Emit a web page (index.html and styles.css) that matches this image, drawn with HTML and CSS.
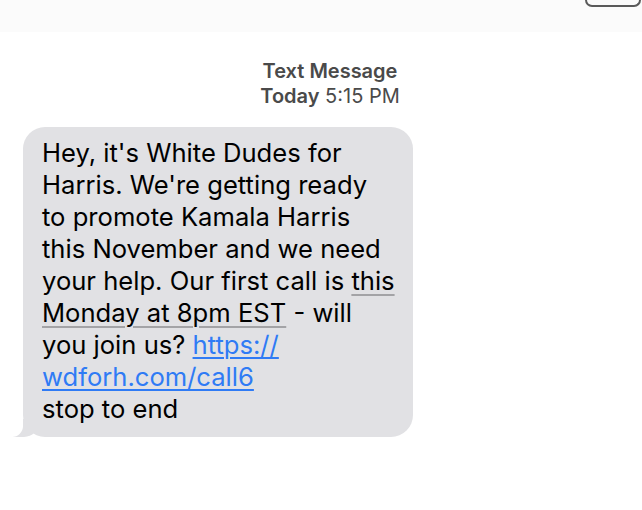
FILE: index.html
```html
<!DOCTYPE html>
<html lang="en">
<head>
    <meta charset="UTF-8">
    <meta name="viewport" content="width=device-width, initial-scale=1.0">
    <title>Text Message</title>
    <link rel="stylesheet" href="styles.css">
</head>
<body>
    <div class="topbar">
        <div class="search-edge"></div>
    </div>
    <div class="thread">
        <div class="thread-meta">
            <div class="meta-service">Text Message</div>
            <div class="meta-time"><span class="meta-day">Today</span> 5:15 PM</div>
        </div>
        <div class="message">
            <div class="bubble">
                Hey, it's White Dudes for<br>
                Harris. We're getting ready<br>
                to promote Kamala Harris<br>
                this November and we need<br>
                your help. Our first call is <span class="date-link">this<br>
                Monday at 8pm EST</span> - will<br>
                you join us? <a href="#" class="link">https://<br>wdforh.com/call6</a><br>
                stop to end
            </div>
        </div>
    </div>
</body>
</html>
```

FILE: styles.css
```css
body {
    margin: 0;
    background: #ffffff;
    font-family: Inter, "Noto Sans", sans-serif;
    color: #000;
}
.topbar {
    height: 32px;
    background: #fbfbfb;
    display: flex;
    justify-content: flex-end;
    align-items: flex-start;
}
.search-edge {
    width: 52px;
    height: 5px;
    border: 2px solid #5a5a5a;
    border-top: none;
    border-radius: 0 0 9px 9px;
    margin-right: 1px;
}
.thread {
    display: flex;
    flex-direction: column;
}
.thread-meta {
    width: 660px;
    margin-top: 27px;
    text-align: center;
    color: #4a4a4a;
    font-size: 20px;
    line-height: 25px;
}
.meta-service,
.meta-day {
    font-weight: 600;
}
.message {
    padding: 18px 0 0 23px;
}
.bubble {
    position: relative;
    width: 363px;
    padding: 10px 8px 12px 19px;
    background: #e1e1e4;
    border-radius: 22px;
    font-size: 25.6px;
    line-height: 32px;
    white-space: nowrap;
}
.bubble::before {
    content: "";
    position: absolute;
    left: -10px;
    bottom: 0;
    width: 26px;
    height: 18px;
    background: #e1e1e4;
    border-bottom-right-radius: 15px;
}
.bubble::after {
    content: "";
    position: absolute;
    left: -16px;
    bottom: 0;
    width: 16px;
    height: 18px;
    background: #ffffff;
    border-bottom-right-radius: 11px;
}
.date-link {
    text-decoration: underline;
    text-decoration-color: #a3a3a6;
    text-decoration-thickness: 2px;
    text-underline-offset: 4px;
}
.link {
    color: #2f7bf5;
    text-decoration: underline;
    text-decoration-thickness: 1.5px;
    text-underline-offset: 3px;
}
```
